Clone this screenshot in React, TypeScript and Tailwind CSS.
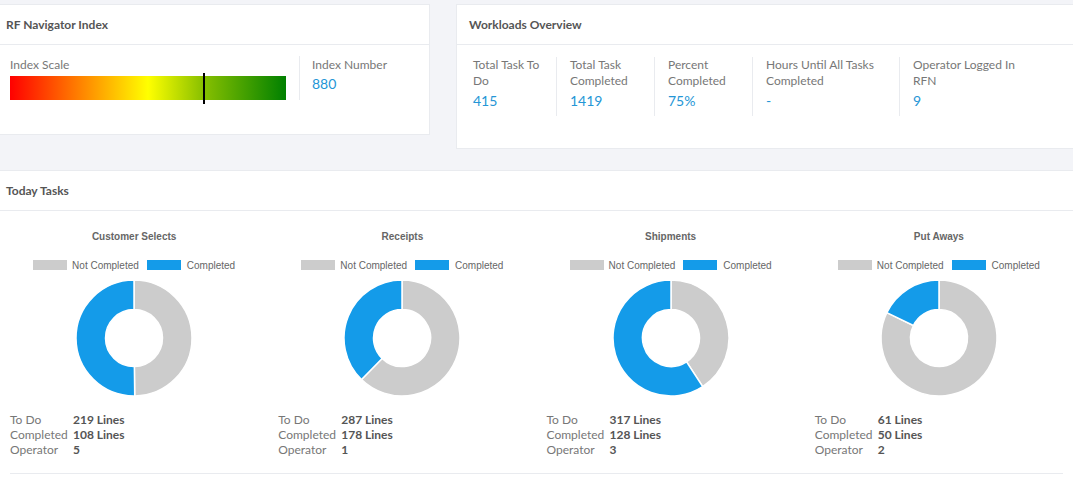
type Donut = {
  title: string;
  notDone: number; // share of the ring painted grey, clockwise from top
  todo: string;
  completed: string;
  operator: string;
};

const charts: Donut[] = [
  { title: "Customer Selects", notDone: 0.498, todo: "219 Lines", completed: "108 Lines", operator: "5" },
  { title: "Receipts", notDone: 0.623, todo: "287 Lines", completed: "178 Lines", operator: "1" },
  { title: "Shipments", notDone: 0.408, todo: "317 Lines", completed: "128 Lines", operator: "3" },
  { title: "Put Aways", notDone: 0.822, todo: "61 Lines", completed: "50 Lines", operator: "2" },
];

const workloads = [
  { label: "Total Task To Do", value: "415", cls: "w-[100px] pl-[16px] pr-[14px] border-r" },
  { label: "Total Task Completed", value: "1419", cls: "w-[98px] pl-[13px] pr-[5px] border-r" },
  { label: "Percent Completed", value: "75%", cls: "w-[98px] pl-[13px] pr-[5px] border-r" },
  { label: "Hours Until All Tasks Completed", value: "-", cls: "w-[147px] pl-[13px] pr-[20px] border-r" },
  { label: "Operator Logged In RFN", value: "9", cls: "w-[140px] pl-[13px] pr-[14px]" },
];

function arcPath(cx: number, cy: number, r: number, r0: number, from: number, to: number) {
  const pt = (rad: number, t: number) => {
    const a = t * Math.PI * 2 - Math.PI / 2;
    return `${cx + rad * Math.cos(a)} ${cy + rad * Math.sin(a)}`;
  };
  const large = to - from > 0.5 ? 1 : 0;
  return `M ${pt(r, from)} A ${r} ${r} 0 ${large} 1 ${pt(r, to)} L ${pt(r0, to)} A ${r0} ${r0} 0 ${large} 0 ${pt(r0, from)} Z`;
}

function Ring({ notDone }: { notDone: number }) {
  return (
    <svg width="120" height="120" viewBox="0 0 120 120">
      <path d={arcPath(60, 60, 58, 28.5, 0, notDone)} fill="#cccccc" stroke="#fff" strokeWidth="1.5" />
      <path d={arcPath(60, 60, 58, 28.5, notDone, 1)} fill="#149be9" stroke="#fff" strokeWidth="1.5" />
    </svg>
  );
}

function ChartCol({ c }: { c: Donut }) {
  return (
    <div className="flex flex-col">
      <div className="flex flex-col items-center font-['Liberation_Sans',Arial,sans-serif] text-[10px] text-[#666]">
        <div className="mt-[19px] leading-[14px] font-bold">{c.title}</div>
        <div className="mt-[15px] flex items-center h-[12px]">
          <span className="w-[34px] h-[10px] bg-[#cccccc]" />
          <span className="ml-[5px]">Not Completed</span>
          <span className="ml-[8px] w-[34px] h-[10px] bg-[#149be9]" />
          <span className="ml-[6px]">Completed</span>
        </div>
        <div className="mt-[7px]">
          <Ring notDone={c.notDone} />
        </div>
      </div>
      <div className="mt-[14px] pl-[10px] text-[12px] leading-[15px]">
        <div className="flex">
          <span className="w-[63px] text-[#777]">To Do</span>
          <span className="font-bold text-[#555]">{c.todo}</span>
        </div>
        <div className="flex">
          <span className="w-[63px] text-[#777]">Completed</span>
          <span className="font-bold text-[#555]">{c.completed}</span>
        </div>
        <div className="flex">
          <span className="w-[63px] text-[#777]">Operator</span>
          <span className="font-bold text-[#555]">{c.operator}</span>
        </div>
      </div>
    </div>
  );
}

export default function App() {
  return (
    <div className="min-h-screen bg-[#f3f4f8] font-['Lato',sans-serif] pt-[4px] overflow-hidden">
      <div className="flex items-start">
        <div className="w-[430px] h-[131px] bg-white border border-l-0 border-[#e9ebef]">
          <div className="h-[40px] flex items-center pl-[6px] border-b border-[#e9ebef] text-[12px] font-bold text-[#555]">
            RF Navigator Index
          </div>
          <div className="flex pt-[11px]">
            <div className="pl-[10px] pr-[13px]">
              <div className="text-[12px] leading-[18px] text-[#777]">Index Scale</div>
              <div className="relative mt-[2px] w-[276px] h-[24px] bg-[linear-gradient(to_right,#ff0000_0%,#ff8000_25%,#ffff00_50%,#88c000_70%,#008000_100%)]">
                <span className="absolute left-[193px] top-[-3px] w-[2px] h-[31px] bg-black" />
              </div>
            </div>
            <div className="border-l border-[#e9ebef] pl-[12px] h-[44px]">
              <div className="text-[12px] leading-[18px] text-[#777]">Index Number</div>
              <div className="text-[14px] leading-[20px] text-[#2596d6]">880</div>
            </div>
          </div>
        </div>
        <div className="ml-[26px] flex-1 h-[145px] bg-white border border-r-0 border-[#e9ebef]">
          <div className="h-[40px] flex items-center pl-[12px] border-b border-[#e9ebef] text-[12px] font-bold text-[#555]">
            Workloads Overview
          </div>
          <div className="flex pt-[12px]">
            {workloads.map((w) => (
              <div key={w.label} className={`${w.cls} border-[#e9ebef] h-[59px]`}>
                <div className="text-[12px] leading-[16px] text-[#777]">{w.label}</div>
                <div className="mt-[2px] text-[14px] leading-[20px] text-[#2596d6]">{w.value}</div>
              </div>
            ))}
          </div>
        </div>
      </div>

      <div className="mt-[21px] bg-white border-t border-[#e9ebef] h-[320px]">
        <div className="h-[40px] flex items-center pl-[6px] border-b border-[#e9ebef] text-[12px] font-bold text-[#555]">
          Today Tasks
        </div>
        <div className="grid grid-cols-4">
          {charts.map((c) => (
            <ChartCol key={c.title} c={c} />
          ))}
        </div>
        <div className="mx-[10px] mt-[16px] border-b border-[#e9ebef]" />
      </div>
    </div>
  );
}
